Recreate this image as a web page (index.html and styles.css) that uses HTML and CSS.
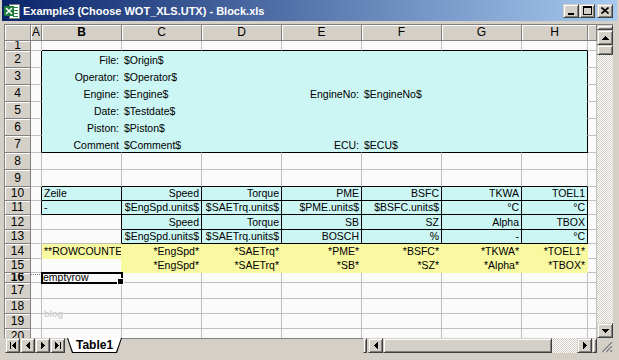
FILE: index.html
```html
<!DOCTYPE html>
<html lang="de">
<head>
<meta charset="UTF-8">
<title>Example3 (Choose WOT_XLS.UTX) - Block.xls</title>
<link rel="stylesheet" href="styles.css">
</head>
<body>
<div class="window">
  <div class="titlebar">
    <svg class="app-icon" width="16" height="16" viewBox="0 0 16 16" shape-rendering="crispEdges">
      <rect x="5" y="1" width="10" height="14" fill="#fff" stroke="#808080"/>
      <path d="M9 4h5M9 7h5M9 10h5M9 13h5" stroke="#1d8a3c"/>
      <rect x="0" y="3" width="10" height="10" fill="#1d7a3a"/>
      <path d="M2 5l6 6M8 5l-6 6" stroke="#fff" stroke-width="1.5" shape-rendering="auto"/>
    </svg>
    <span class="title">Example3 (Choose WOT_XLS.UTX) - Block.xls</span>
    <div class="caption-buttons">
      <div class="btn3d cap-btn"><svg width="8" height="8"><path d="M1 6h6v2H1z"/></svg></div>
      <div class="btn3d cap-btn"><svg width="9" height="9"><path fill-rule="evenodd" d="M0 0h9v9H0zM1 2v6h7V2z"/></svg></div>
      <div class="btn3d cap-btn close"><svg width="8" height="7"><path d="M0.5 0.5l7 6M7.5 0.5l-7 6" stroke="#000" stroke-width="1.6"/></svg></div>
    </div>
  </div>

  <div class="client">
    <div class="sheet-view">
      <div class="sheet">
        <!-- column headers -->
        <div class="corner"></div><div class="ch">A</div><div class="ch on">B</div><div class="ch">C</div><div class="ch">D</div><div class="ch">E</div><div class="ch">F</div><div class="ch">G</div><div class="ch">H</div><div class="ch"></div>

        <div class="rh">1</div><div></div><div class="bb"></div><div class="bb"></div><div class="bb"></div><div class="bb"></div><div class="bb"></div><div class="bb"></div><div class="bb"></div><div></div>

        <!-- header block -->
        <div class="rh">2</div><div class="br"></div><div class="cy r">File:</div><div class="cy">$Origin$</div><div class="cy"></div><div class="cy"></div><div class="cy"></div><div class="cy"></div><div class="cy br"></div><div></div>
        <div class="rh">3</div><div class="br"></div><div class="cy r">Operator:</div><div class="cy">$Operator$</div><div class="cy"></div><div class="cy"></div><div class="cy"></div><div class="cy"></div><div class="cy br"></div><div></div>
        <div class="rh">4</div><div class="br"></div><div class="cy r">Engine:</div><div class="cy">$Engine$</div><div class="cy"></div><div class="cy r">EngineNo:</div><div class="cy">$EngineNo$</div><div class="cy"></div><div class="cy br"></div><div></div>
        <div class="rh">5</div><div class="br"></div><div class="cy r">Date:</div><div class="cy">$Testdate$</div><div class="cy"></div><div class="cy"></div><div class="cy"></div><div class="cy"></div><div class="cy br"></div><div></div>
        <div class="rh">6</div><div class="br"></div><div class="cy r">Piston:</div><div class="cy">$Piston$</div><div class="cy"></div><div class="cy"></div><div class="cy"></div><div class="cy"></div><div class="cy br"></div><div></div>
        <div class="rh">7</div><div class="br"></div><div class="cy bb r">Comment</div><div class="cy bb">$Comment$</div><div class="cy bb"></div><div class="cy bb r">ECU:</div><div class="cy bb">$ECU$</div><div class="cy bb"></div><div class="cy bb br"></div><div></div>

        <div class="rh">8</div><div></div><div></div><div></div><div></div><div></div><div></div><div></div><div></div><div></div>
        <div class="rh">9</div><div></div><div class="bb"></div><div class="bb"></div><div class="bb"></div><div class="bb"></div><div class="bb"></div><div class="bb"></div><div class="bb"></div><div></div>

        <!-- channel table -->
        <div class="rh">10</div><div class="br"></div><div class="cyb">Zeile</div><div class="cyb r">Speed</div><div class="cyb r">Torque</div><div class="cyb r">PME</div><div class="cyb r">BSFC</div><div class="cyb r">TKWA</div><div class="cyb r">TOEL1</div><div></div>
        <div class="rh">11</div><div class="br"></div><div class="cyb">-</div><div class="cyb r">$EngSpd.units$</div><div class="cyb r">$SAETrq.units$</div><div class="cyb r">$PME.units$</div><div class="cyb r">$BSFC.units$</div><div class="cyb r">°C</div><div class="cyb r">°C</div><div></div>
        <div class="rh">12</div><div></div><div class="br"></div><div class="cyb r">Speed</div><div class="cyb r">Torque</div><div class="cyb r">SB</div><div class="cyb r">SZ</div><div class="cyb r">Alpha</div><div class="cyb r">TBOX</div><div></div>
        <div class="rh">13</div><div></div><div class="br"></div><div class="cyb r">$EngSpd.units$</div><div class="cyb r">$SAETrq.units$</div><div class="cyb r">BOSCH</div><div class="cyb r">%</div><div class="cyb r">-</div><div class="cyb r">°C</div><div></div>

        <div class="rh">14</div><div></div><div class="ye">**ROWCOUNTER</div><div class="ye r">*EngSpd*</div><div class="ye r">*SAETrq*</div><div class="ye r">*PME*</div><div class="ye r">*BSFC*</div><div class="ye r">*TKWA*</div><div class="ye r">*TOEL1*</div><div></div>
        <div class="rh">15</div><div></div><div class="yr"></div><div class="ye r">*EngSpd*</div><div class="ye r">*SAETrq*</div><div class="ye r">*SB*</div><div class="ye r">*SZ*</div><div class="ye r">*Alpha*</div><div class="ye r">*TBOX*</div><div></div>

        <div class="rh on short">16</div><div class="dots"></div><div class="sel">emptyrow</div><div></div><div></div><div></div><div></div><div></div><div></div><div></div>
        <div class="rh">17</div><div></div><div></div><div></div><div></div><div></div><div></div><div></div><div></div><div></div>
        <div class="rh">18</div><div></div><div></div><div></div><div></div><div></div><div></div><div></div><div></div><div></div>
        <div class="rh">19</div><div></div><div></div><div></div><div></div><div></div><div></div><div></div><div></div><div></div>
        <div class="rh">20</div><div></div><div></div><div></div><div></div><div></div><div></div><div></div><div></div><div></div>

        <span class="watermark">blog</span>
      </div>

      <div class="vscroll">
        <div class="btn3d split"></div>
        <div class="btn3d arrow"><svg width="7" height="4"><path d="M3 0h1v1h1v1h1v1h1v1H0v-1h1v-1h1v-1h1z"/></svg></div>
        <div class="btn3d vthumb"></div>
        <div class="track"></div>
        <div class="btn3d arrow"><svg width="7" height="4"><path d="M0 0h7v1h-1v1h-1v1h-1v1h-1v-1h-1v-1h-1v-1h-1z"/></svg></div>
      </div>
    </div>

    <div class="tabbar">
      <div class="tab-nav">
        <div class="btn3d nav"><svg width="6" height="7"><path d="M0 0h1v7H0zM5 0h1v7h-1v-1h-1v-1h-1v-1h-1v-1h1v-1h1v-1h1z"/></svg></div>
        <div class="btn3d nav"><svg width="4" height="7"><path d="M3 0h1v7h-1v-1h-1v-1h-1v-1h-1v-1h1v-1h1v-1h1z"/></svg></div>
        <div class="btn3d nav"><svg width="4" height="7"><path d="M0 0h1v1h1v1h1v1h1v1h-1v1h-1v1h-1v1h-1z"/></svg></div>
        <div class="btn3d nav"><svg width="6" height="7"><path d="M0 0h1v1h1v1h1v1h1v1h-1v1h-1v1h-1v1h-1zM5 0h1v7h-1z"/></svg></div>
      </div>
      <div class="tab"><div class="tab-face">Table1</div></div>
      <div class="tab-fill"></div>
      <div class="btn3d tab-split"></div>
      <div class="hscroll">
        <div class="btn3d arrow"><svg width="4" height="7"><path d="M3 0h1v7h-1v-1h-1v-1h-1v-1h-1v-1h1v-1h1v-1h1z"/></svg></div>
        <div class="btn3d hthumb"></div>
        <div class="track"></div>
        <div class="btn3d arrow"><svg width="4" height="7"><path d="M0 0h1v1h1v1h1v1h1v1h-1v1h-1v1h-1v1h-1z"/></svg></div>
      </div>
      <div class="btn3d hsplit"></div>
      <div class="grip">
        <svg width="16" height="15" viewBox="0 0 16 15">
          <path d="M15 3L4 14M15 7L8 14M15 11L12 14" stroke="#fff"/>
          <path d="M15 4L5 14M15 8L9 14M15 12L13 14" stroke="#808080" stroke-width="1.5"/>
        </svg>
      </div>
    </div>
  </div>
</div>
</body>
</html>
```

FILE: styles.css
```css
* {
  box-sizing: border-box;
}
body {
  margin: 0;
  background: #d4d0c8;
  font-family: 'Liberation Sans', Arial, sans-serif;
}
.window {
  width: 619px;
  height: 360px;
  background: #d4d0c8;
  display: flex;
  flex-direction: column;
  overflow: hidden;
}

/* title bar */
.titlebar {
  height: 21px;
  margin: 0 2px;
  padding: 0 4px 0 2px;
  display: flex;
  align-items: center;
  background: linear-gradient(to right, #0a246a, #a6caf0);
  color: #fff;
}
.app-icon {
  flex: none;
  margin-right: 3px;
}
.title {
  flex: 1;
  font-size: 11px;
  font-weight: 700;
  white-space: nowrap;
}
.caption-buttons {
  display: flex;
}
.cap-btn {
  width: 16px;
  height: 14px;
}
.cap-btn.close {
  margin-left: 2px;
}

/* classic 3d button */
.btn3d {
  background: #d4d0c8;
  border: 1px solid;
  border-color: #d4d0c8 #404040 #404040 #d4d0c8;
  box-shadow: inset 1px 1px #fff, inset -1px -1px #808080;
  display: flex;
  align-items: center;
  justify-content: center;
}
.btn3d svg {
  display: block;
}

/* workbook area */
.client {
  flex: 1;
  padding: 3px 6px 0 4px;
  display: flex;
  flex-direction: column;
}
.sheet-view {
  display: flex;
  height: 314px;
  border-top: 1px solid #808080;
  border-left: 1px solid #808080;
}
.sheet {
  position: relative;
  width: 592px;
  height: 313px;
  overflow: hidden;
  background: #fbfbfb;
  display: grid;
  grid-template-columns: 26px 11px repeat(6, 80px) 66px 9px;
  grid-template-rows: 16px 10px repeat(8, 17px) 14px 14px 15px 14px 15px 14px 10px 16px 15px 15px 15px;
}
.sheet > div {
  border-right: 1px solid #c0c0c0;
  border-bottom: 1px solid #c0c0c0;
  overflow: hidden;
  white-space: nowrap;
  display: flex;
  align-items: flex-end;
  padding: 0 2px;
  font-size: 10.5px;
  line-height: 13px;
  color: #000;
}
.sheet > .corner,
.sheet > .ch,
.sheet > .rh {
  background: #d4d0c8;
  border-right-color: #808080;
  border-bottom-color: #808080;
  box-shadow: inset 1px 1px #fff;
  justify-content: center;
  align-items: center;
  padding: 0;
  font-size: 12px;
}
.sheet > .short {
  line-height: 9px;
}
.sheet > .on {
  font-weight: 700;
}
.sheet > .r {
  justify-content: flex-end;
}
.sheet > .cy {
  background: #ccf6f4;
  border-color: #ccf6f4;
}
.sheet > .cyb {
  background: #ccf6f4;
  border-color: #000;
}
.sheet > .ye {
  background: #f9f9a2;
  border-color: #f9f9a2;
}
.sheet > .yr {
  border-right-color: #f9f9a2;
}
.sheet > .bb {
  border-bottom-color: #000;
}
.sheet > .br {
  border-right-color: #000;
}
.sheet > .dots {
  background: linear-gradient(to right, #777 50%, transparent 50%) 2px 1px / 2px 1px repeat-x;
}
.sheet > .sel {
  position: relative;
  overflow: visible;
  align-items: flex-start;
  line-height: 8px;
  padding: 0 1px;
  outline: 2px solid #000;
  outline-offset: -1px;
}
.sel::after {
  content: '';
  position: absolute;
  right: -3px;
  bottom: -3px;
  width: 5px;
  height: 5px;
  background: #000;
  border: 1px solid #fff;
}
.watermark {
  position: absolute;
  left: 39px;
  top: 284px;
  font-size: 9px;
  font-weight: 700;
  color: #cfcfcf;
}

/* scroll bars */
.vscroll {
  width: 16px;
  display: flex;
  flex-direction: column;
}
.split {
  height: 5px;
}
.vscroll .arrow {
  height: 15px;
}
.vthumb {
  height: 10px;
}
.track {
  flex: 1;
  background: repeating-conic-gradient(#fff 0 25%, #d4d0c8 0 50%) 0 0 / 2px 2px;
}

/* sheet tabs */
.tabbar {
  height: 15px;
  display: flex;
}
.tab-nav {
  display: flex;
  margin-left: 1px;
}
.nav {
  width: 15px;
  height: 15px;
}
.tab {
  width: 55px;
  margin-left: 2px;
  padding: 0 1px 1px;
  background: #000;
  clip-path: polygon(0 0, 100% 0, calc(100% - 5px) 100%, 5px 100%);
}
.tab-face {
  height: 100%;
  background: #fff;
  clip-path: polygon(0 0, 100% 0, calc(100% - 5px) 100%, 5px 100%);
  font-size: 12px;
  font-weight: 700;
  line-height: 14px;
  text-align: center;
}
.tab-fill {
  flex: 1;
  border-top: 1px solid #808080;
}
.tab-split {
  width: 4px;
  margin-right: 1px;
}
.hscroll {
  width: 224px;
  display: flex;
}
.hscroll .arrow {
  width: 15px;
}
.hthumb {
  width: 169px;
}
.hsplit {
  width: 5px;
}
.grip {
  width: 16px;
}
.grip svg {
  display: block;
}
```
